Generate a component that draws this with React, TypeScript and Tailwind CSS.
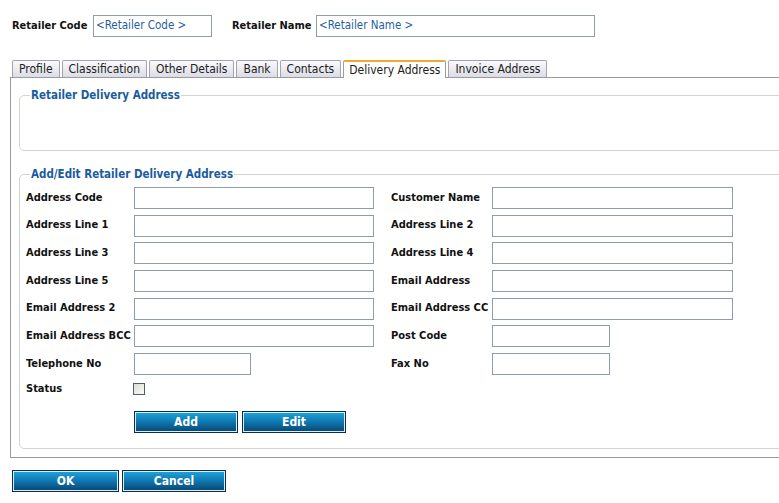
import React from 'react';

const FONT = "font-['DejaVu_Sans',Tahoma,sans-serif] [font-stretch:condensed]";

const tabs = ['Profile', 'Classification', 'Other Details', 'Bank', 'Contacts', 'Delivery Address', 'Invoice Address'];

const rows: [string, string, string, string][] = [
  ['Address Code', 'w-[240px]', 'Customer Name', 'w-[241px]'],
  ['Address Line 1', 'w-[240px]', 'Address Line 2', 'w-[241px]'],
  ['Address Line 3', 'w-[240px]', 'Address Line 4', 'w-[241px]'],
  ['Address Line 5', 'w-[240px]', 'Email Address', 'w-[241px]'],
  ['Email Address 2', 'w-[240px]', 'Email Address CC', 'w-[241px]'],
  ['Email Address BCC', 'w-[240px]', 'Post Code', 'w-[118px]'],
  ['Telephone No', 'w-[117px]', 'Fax No', 'w-[118px]'],
];

function Field({ w }: { w: string }) {
  return <div className={`${w} h-[22px] border border-[#8f9cae] bg-white`} />;
}

function BlueButton({ label, w }: { label: string; w: string }) {
  return (
    <button
      className={`${w} h-[22px] border border-[#0a2d4a] bg-gradient-to-b from-[#1ea6dc] via-[#0f77b0] to-[#08456f] text-white text-[12px] font-bold shadow-[inset_0_0_0_1px_#d8eef8]`}
    >
      {label}
    </button>
  );
}

export default function App() {
  return (
    <div className={`w-[779px] h-[503px] overflow-hidden bg-white text-[11px] text-[#111] ${FONT}`}>
      {/* header */}
      <div className="flex items-center pt-[15px] pl-[12px]">
        <span className="w-[81px] font-bold">Retailer Code</span>
        <div className="w-[119px] h-[22px] border border-[#8f9cae] flex items-center pl-[2px] text-[11.5px] text-[#1f5fa0]">
          &lt;Retailer Code &gt;
        </div>
        <span className="w-[84px] ml-[20px] font-bold">Retailer Name</span>
        <div className="w-[279px] h-[22px] border border-[#8f9cae] flex items-center pl-[2px] text-[11.5px] text-[#1f5fa0]">
          &lt;Retailer Name &gt;
        </div>
      </div>

      {/* tabs */}
      <div className="mt-[23px] ml-[10px] flex items-end gap-[2px] pl-[2px] border-b border-[#9a9aa2] w-[800px]">
        {tabs.map((t) => {
          const active = t === 'Delivery Address';
          return (
            <div
              key={t}
              className={
                active
                  ? 'h-[18px] -mb-px px-[5px] flex items-center text-[12px] text-[#222] bg-white border border-b-0 border-[#9a9aa2] border-t-2 border-t-[#f0a830] rounded-t-[2px]'
                  : 'h-[17px] px-[6px] flex items-center text-[12px] text-[#222] bg-gradient-to-b from-[#fafafc] to-[#dcdce6] border border-b-0 border-[#a4a4b0] rounded-t-[2px]'
              }
            >
              {t}
            </div>
          );
        })}
      </div>

      {/* panel */}
      <div className="ml-[10px] w-[800px] h-[380px] border-l border-b border-[#9a9a9a] pt-[10px] pl-[8px]">
        <fieldset className="w-[790px] h-[63px] border border-[#d4d4cc] rounded-[5px] px-[10px]">
          <legend className="px-[1px] text-[11.5px] text-[#1a5c9e] font-bold leading-[14px]">Retailer Delivery Address</legend>
        </fieldset>

        <fieldset className="mt-[16px] w-[790px] h-[282px] border border-[#d4d4cc] rounded-[5px] px-[10px]">
          <legend className="px-[1px] text-[11.5px] text-[#1a5c9e] font-bold leading-[14px]">Add/Edit Retailer Delivery Address</legend>
          <div className="pt-[6px] flex flex-col gap-[5.67px] -ml-[4px]">
            {rows.map(([l1, w1, l2, w2]) => (
              <div key={l1} className="flex items-center h-[22px]">
                <span className="w-[108px] font-bold whitespace-nowrap">{l1}</span>
                <div className="w-[257px]">
                  <Field w={w1} />
                </div>
                <span className="w-[101px] font-bold whitespace-nowrap">{l2}</span>
                <Field w={w2} />
              </div>
            ))}
          </div>
          <div className="flex items-center h-[16px] mt-[6px] -ml-[4px]">
            <span className="w-[107px] font-bold">Status</span>
            <div className="w-[12px] h-[12px] border border-[#4e5e70] bg-gradient-to-br from-[#dcdcd8] to-[#fafaf8]" />
          </div>
          <div className="flex gap-[4px] mt-[14px] ml-[104px]">
            <BlueButton label="Add" w="w-[104px]" />
            <BlueButton label="Edit" w="w-[104px]" />
          </div>
        </fieldset>
      </div>

      {/* footer buttons */}
      <div className="flex gap-[3px] mt-[12px] ml-[12px]">
        <BlueButton label="OK" w="w-[107px]" />
        <BlueButton label="Cancel" w="w-[104px]" />
      </div>
    </div>
  );
}
